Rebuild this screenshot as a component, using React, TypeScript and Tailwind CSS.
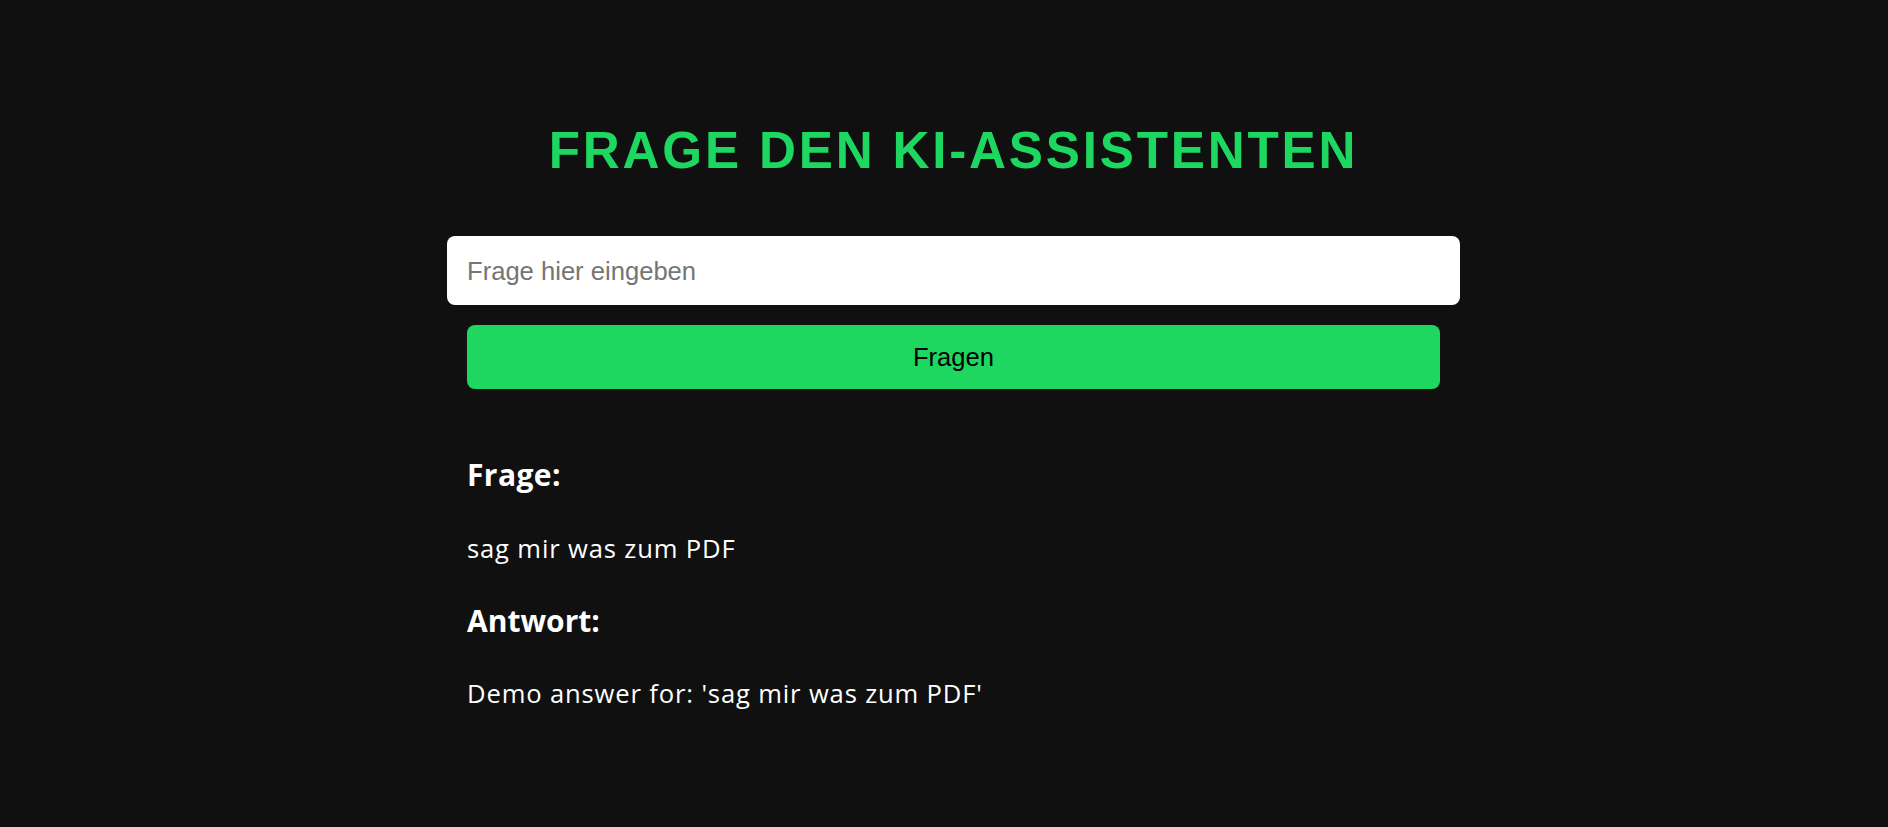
import { useState } from 'react';

export default function App() {
  const [question, setQuestion] = useState('');
  const [asked] = useState('sag mir was zum PDF');

  return (
    <div className="min-h-screen w-full bg-[#101010] flex justify-center pl-[19px] pt-[121px] pb-16">
      <div className="w-[1013px] flex flex-col">
        {/* Title */}
        <h1 className="text-center text-[51.2px] leading-[59px] font-bold tracking-[2.8px] text-[#1ed760] font-['Liberation_Sans',Arial,sans-serif]">
          FRAGE DEN KI-ASSISTENTEN
        </h1>

        {/* Ask form */}
        <input
          value={question}
          onChange={(e) => setQuestion(e.target.value)}
          placeholder="Frage hier eingeben"
          className="mt-[56px] h-[69px] w-full rounded-lg bg-white px-5 pt-[2px] text-[25.6px] text-black placeholder:text-[#757575] outline-none font-['Liberation_Sans',Arial,sans-serif]"
        />
        <button className="mt-5 mx-5 h-16 rounded-lg bg-[#1ed760] text-[25.6px] text-black font-['Liberation_Sans',Arial,sans-serif]">
          Fragen
        </button>

        {/* Result */}
        <div className="mt-[65px] px-5 text-white font-['Open_Sans',sans-serif]">
          <h3 className="text-[30px] leading-[42px] font-bold tracking-[0.4px]">Frage:</h3>
          <p className="mt-[35px] text-[25.6px] leading-[35px] tracking-[0.85px]">{asked}</p>
          <h3 className="mt-[34px] text-[30px] leading-[42px] font-bold">Antwort:</h3>
          <p className="mt-[34px] text-[25.6px] leading-[35px] tracking-[0.85px]">Demo answer for: '{asked}'</p>
        </div>
      </div>
    </div>
  );
}
